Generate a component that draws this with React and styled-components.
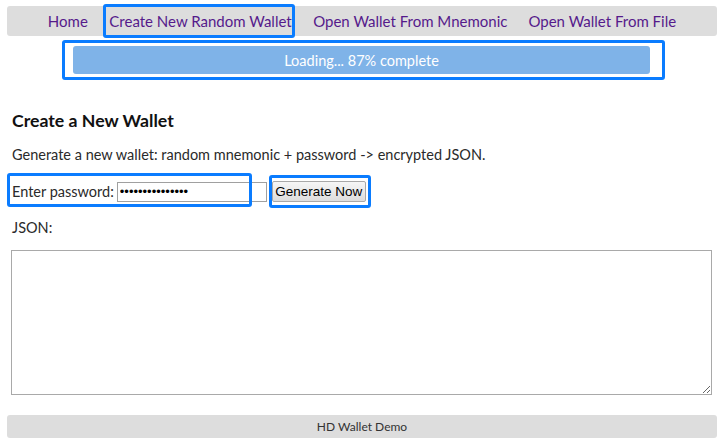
import React from "react";
import styled, { createGlobalStyle } from "styled-components";

const GlobalStyle = createGlobalStyle`
  html, body {
    margin: 0;
    padding: 0;
    background: #fff;
  }
  body {
    font-family: Lato, "Open Sans", sans-serif;
    color: #222;
  }
`;

const navItems = [
  { label: "Home" },
  { label: "Create New Random Wallet", active: true },
  { label: "Open Wallet From Mnemonic" },
  { label: "Open Wallet From File" },
];

const Page = styled.div`
  width: 723px;
  padding: 6px 6px 0 7px;
  box-sizing: border-box;
`;

const Nav = styled.nav`
  height: 30px;
  background: #dddddd;
  border-radius: 3px;
  display: flex;
  align-items: center;
  justify-content: center;
`;

const NavLink = styled.a`
  font-size: 15px;
  color: #551a8b;
  text-decoration: none;
  padding: 0 10.5px;
  line-height: 24px;
  white-space: nowrap;
  cursor: pointer;
  ${(p) =>
    p.$active &&
    `
    margin: 0 8px 0 5px;
    padding: 2px 0 2px 3px;
    border: 3px solid #0a7cff;
    border-radius: 3px;
  `}
`;

const ProgressWrap = styled.div`
  display: flex;
  justify-content: center;
  margin-top: 4px;
  padding-left: 3px;
`;

const Mark = styled.div`
  border: 3px solid #0a7cff;
  border-radius: 3px;
  padding: 3px 12px 3px 8px;
`;

const ProgressBar = styled.div`
  width: 577px;
  height: 28px;
  border-radius: 3px;
  background: #7fb3e8;
  color: #fff;
  font-size: 14.5px;
  display: flex;
  align-items: center;
  justify-content: center;
`;

const Main = styled.main`
  padding: 0 5px;
`;

const Heading = styled.h2`
  margin: 30px 0 0;
  font-size: 17.7px;
  line-height: 22px;
  font-weight: 700;
  color: #111;
`;

const Text = styled.p`
  margin: ${(p) => p.$top || 0}px 0 0;
  font-size: 14.5px;
  line-height: 20px;
  color: #2a2a2a;
`;

const Row = styled.div`
  position: relative;
  margin-top: 16px;
  display: flex;
  align-items: center;
  height: 21px;
  font-size: 14.5px;
  color: #2a2a2a;
`;

const Label = styled.label`
  margin-right: 3px;
`;

const PasswordInput = styled.input`
  width: 150px;
  height: 20px;
  box-sizing: border-box;
  border: 1px solid #a0a0a0;
  padding: 0 2px;
  font-family: "Liberation Sans", Arial, sans-serif;
  font-size: 13px;
  outline: none;
`;

const Button = styled.button`
  margin-left: 5px;
  width: 94px;
  height: 21px;
  padding: 0;
  font-family: "Liberation Sans", Arial, sans-serif;
  font-size: 13.5px;
  color: #000;
  border: 1px solid #a8a8a8;
  border-radius: 2px;
  background: linear-gradient(#f6f6f6, #dddddd);
`;

const Overlay = styled.span`
  position: absolute;
  left: ${(p) => p.$left}px;
  top: ${(p) => p.$top}px;
  width: ${(p) => p.$width}px;
  height: ${(p) => p.$height}px;
  box-sizing: border-box;
  border: 3px solid #0a7cff;
  border-radius: 3px;
  pointer-events: none;
`;

const JsonArea = styled.textarea`
  display: block;
  margin: 12px 0 0 -1px;
  width: 701px;
  height: 145px;
  box-sizing: border-box;
  border: 1px solid #a9a9a9;
  resize: vertical;
`;

const Footer = styled.footer`
  margin: 20px 0 0;
  height: 23px;
  background: #dddddd;
  border-radius: 3px;
  display: flex;
  align-items: center;
  justify-content: center;
  font-size: 12px;
  color: #333;
`;

export default function App() {
  return (
    <Page>
      <GlobalStyle />
      <Nav>
        {navItems.map((item) => (
          <NavLink key={item.label} $active={item.active}>
            {item.label}
          </NavLink>
        ))}
      </Nav>
      <ProgressWrap>
        <Mark>
          <ProgressBar>Loading... 87% complete</ProgressBar>
        </Mark>
      </ProgressWrap>
      <Main>
        <Heading>Create a New Wallet</Heading>
        <Text $top={13}>
          Generate a new wallet: random mnemonic + password -&gt; encrypted JSON.
        </Text>
        <Row>
          <Label htmlFor="pw">Enter password:</Label>
          <PasswordInput id="pw" type="password" defaultValue="passwordpasswor" />
          <Button>Generate Now</Button>
          <Overlay $left={-5} $top={-8} $width={245} $height={34} />
          <Overlay $left={257} $top={-6} $width={102} $height={33} />
        </Row>
        <Text $top={16}>JSON:</Text>
        <JsonArea />
      </Main>
      <Footer>HD Wallet Demo</Footer>
    </Page>
  );
}
